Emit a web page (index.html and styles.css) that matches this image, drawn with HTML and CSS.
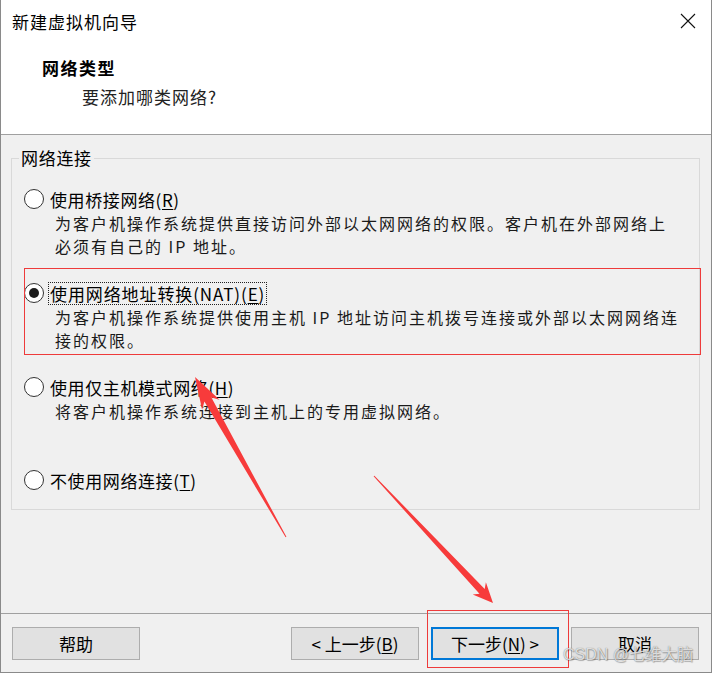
FILE: index.html
```html
<!DOCTYPE html>
<html lang="zh-CN">
<head>
<meta charset="utf-8">
<title>新建虚拟机向导</title>
<link rel="stylesheet" href="styles.css">
</head>
<body>
<div class="window">
  <div class="titlebar">
    <span class="title">新建虚拟机向导</span>
    <svg class="close" width="16" height="16" viewBox="0 0 16 16"><path d="M1 1 L15 15 M15 1 L1 15" stroke="#111" stroke-width="1.1" fill="none"/></svg>
  </div>
  <div class="header">
    <div class="h-title">网络类型</div>
    <div class="h-sub">要添加哪类网络?</div>
  </div>
  <div class="content">
    <div class="group">
      <span class="legend">网络连接</span>
      <div class="option">
        <div class="opt-row"><span class="radio"></span><span class="label">使用桥接网络(<u>R</u>)</span></div>
        <div class="desc">为客户机操作系统提供直接访问外部以太网网络的权限。客户机在外部网络上<br>必须有自己的 IP 地址。</div>
      </div>
      <div class="option">
        <div class="opt-row"><span class="radio checked"></span><span class="label focus">使用网络地址转换(NAT)(<u>E</u>)</span></div>
        <div class="desc">为客户机操作系统提供使用主机 IP 地址访问主机拨号连接或外部以太网网络连<br>接的权限。</div>
      </div>
      <div class="option">
        <div class="opt-row"><span class="radio"></span><span class="label">使用仅主机模式网络(<u>H</u>)</span></div>
        <div class="desc">将客户机操作系统连接到主机上的专用虚拟网络。</div>
      </div>
      <div class="option last">
        <div class="opt-row"><span class="radio"></span><span class="label">不使用网络连接(<u>T</u>)</span></div>
      </div>
    </div>
  </div>
  <div class="footer">
    <button class="btn">帮助</button>
    <div class="spacer"></div>
    <button class="btn">&lt; 上一步(<u>B</u>)</button>
    <button class="btn default">下一步(<u>N</u>) &gt;</button>
    <button class="btn">取消</button>
  </div>
  <div class="mark mark-option"></div>
  <div class="mark mark-next"></div>
  <svg class="arrows" width="712" height="673" viewBox="0 0 712 673">
    <polygon fill="#f73b3b" points="194,377 218.5,399.8 210.4,397.6 285.4,536.8 284.6,537.2 203.4,401.6 201.1,409.7"/>
    <polygon fill="#f73b3b" points="492,603 484.9,582.2 483.7,588.9 373.4,475.7 372.6,476.3 478.5,593.7 471.7,594.6"/>
  </svg>
  <div class="watermark">CSDN @七维大脑</div>
</div>
</body>
</html>
```
FILE: styles.css
```css
* { box-sizing: border-box; }
html, body { margin: 0; padding: 0; background: #fff; }
body { font-family: "Noto Sans CJK SC", "Noto Sans", sans-serif; color: #000; }

.window {
  position: relative;
  width: 712px;
  height: 673px;
  display: flex;
  flex-direction: column;
  border: 1px solid #8a8a8a;
  border-top: none;
  background: #f0f0f0;
  overflow: hidden;
}

.titlebar {
  height: 44px;
  flex: none;
  background: #fff;
  display: flex;
  align-items: center;
  justify-content: space-between;
  padding: 0 15px 0 11px;
}
.title { font-size: 17px; letter-spacing: 1px; line-height: 24px; }
.close { display: block; margin-top: -2px; }

.header {
  flex: none;
  height: 91px;
  background: #fff;
  border-bottom: 1px solid #a0a0a0;
  padding: 12px 0 0 41px;
}
.h-title { font-size: 17px; font-weight: bold; letter-spacing: 1.5px; line-height: 24px; }
.h-sub { font-size: 17px; letter-spacing: 1px; line-height: 24px; margin: 5px 0 0 40px; color: #222; }

.content {
  flex: 1;
  padding: 23px 11px 0 10px;
}
.group {
  position: relative;
  border: 1px solid #d9d9d9;
  padding: 15px 0 17px 11px;
}
.legend {
  position: absolute;
  left: 7px;
  top: -13px;
  padding: 0 2px;
  background: #f0f0f0;
  font-size: 17px;
  line-height: 24px;
  letter-spacing: 0.7px;
}

.option { height: 94px; padding: 13px 0 0 1px; }
.option.last { height: 36px; padding-top: 12px; }
.opt-row { display: flex; align-items: center; height: 24px; }
.radio {
  flex: none;
  width: 20px;
  height: 20px;
  border-radius: 50%;
  border: 1px solid #333;
  background: #fff;
  display: flex;
  align-items: center;
  justify-content: center;
}
.radio.checked::after {
  content: "";
  width: 10px;
  height: 10px;
  border-radius: 50%;
  background: #1b1b1b;
}
.label {
  margin-left: 4px;
  padding: 0 1px;
  border: 1px dotted transparent;
  font-size: 17px;
  line-height: 21px;
  letter-spacing: 0.6px;
}
.label.focus { border-color: #222; letter-spacing: 0.9px; }
.label u { text-underline-offset: 2px; }

.desc {
  margin: 1px 0 0 31px;
  font-size: 16px;
  line-height: 23px;
  letter-spacing: 2px;
  color: #1a1a1a;
  white-space: nowrap;
}

.footer {
  flex: none;
  height: 59px;
  border-top: 1px solid #a0a0a0;
  display: flex;
  align-items: flex-start;
  gap: 12px;
  padding: 13px 12px 0 11px;
}
.spacer { flex: 1; }
.btn {
  width: 128px;
  height: 33px;
  background: #e1e1e1;
  border: 1px solid #adadad;
  font-family: "Noto Sans CJK SC", "Noto Sans", sans-serif;
  font-size: 17px;
  color: #000;
  padding: 0;
  line-height: 24px;
}
.btn u { text-underline-offset: 2px; }
.btn.default { border: 2px solid #0078d7; }

.mark { position: absolute; border: 1px solid #ee3b3b; }
.mark-option { left: 23px; top: 268px; width: 677px; height: 87px; }
.mark-next { left: 426px; top: 610px; width: 142px; height: 58px; }

.arrows { position: absolute; left: 0; top: 0; pointer-events: none; }

.watermark {
  position: absolute;
  left: 562px;
  top: 644px;
  font-family: "Liberation Sans", "Noto Sans CJK SC", sans-serif;
  font-size: 16px;
  line-height: 22px;
  color: rgba(255, 255, 255, 0.75);
  text-shadow: 0 0 1px rgba(60, 60, 60, 0.7), 1px 1px 1px rgba(0, 0, 0, 0.25);
  white-space: nowrap;
}
```
